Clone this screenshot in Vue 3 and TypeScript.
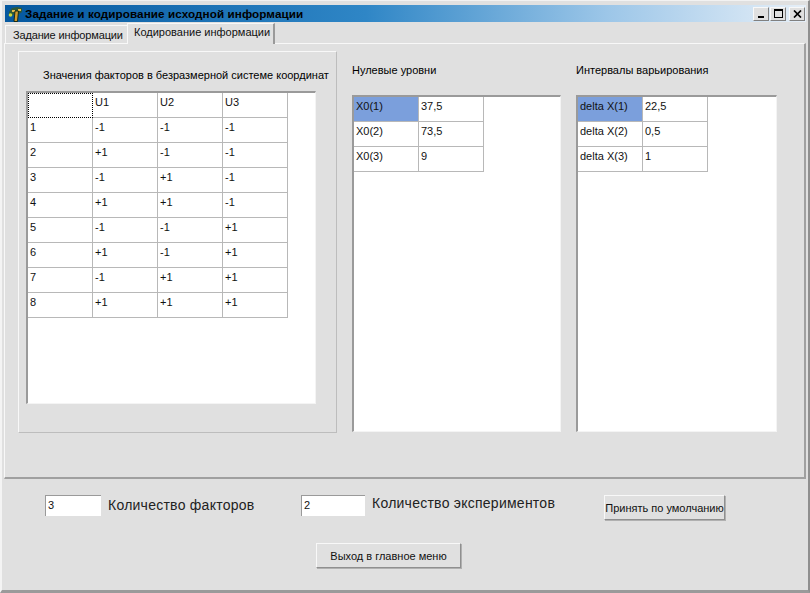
<script setup lang="ts">
const factorRows: string[][] = [
  ['', 'U1', 'U2', 'U3'],
  ['1', '-1', '-1', '-1'],
  ['2', '+1', '-1', '-1'],
  ['3', '-1', '+1', '-1'],
  ['4', '+1', '+1', '-1'],
  ['5', '-1', '-1', '+1'],
  ['6', '+1', '-1', '+1'],
  ['7', '-1', '+1', '+1'],
  ['8', '+1', '+1', '+1'],
]

const zeroRows: string[][] = [
  ['X0(1)', '37,5'],
  ['X0(2)', '73,5'],
  ['X0(3)', '9'],
]

const deltaRows: string[][] = [
  ['delta X(1)', '22,5'],
  ['delta X(2)', '0,5'],
  ['delta X(3)', '1'],
]
</script>

<template>
  <div class="window">
    <div class="titlebar">
      <svg class="app-icon" viewBox="0 0 16 16" aria-hidden="true">
        <path d="M2 6 5 2l5-1 5 1v4l-3 2-4-1-3 3-3-1z" fill="#2f5a3a" />
        <circle cx="3.500" cy="9" r="1.800" fill="#c8d840" />
        <path d="M5 4h3v2H5zM11 3h3v2h-3z" fill="#e2b84a" />
        <path d="M8 5h3.500l-1 10.500H7z" fill="#d09a30" stroke="#10240f" stroke-width=".9" />
      </svg>
      <span class="title">Задание и кодирование исходной информации</span>
      <div class="window-buttons">
        <button type="button" class="win-btn" aria-label="Свернуть"><i class="glyph-min" /></button>
        <button type="button" class="win-btn" aria-label="Развернуть"><i class="glyph-max" /></button>
        <button type="button" class="win-btn win-btn--close" aria-label="Закрыть">
          <svg viewBox="0 0 9 8" aria-hidden="true">
            <path d="M1 0.5 8 7.5M8 0.5 1 7.5" stroke="#000" stroke-width="1.7" fill="none" />
          </svg>
        </button>
      </div>
    </div>

    <div class="tabs">
      <div class="tab">Задание информации</div>
      <div class="tab tab--active">Кодирование информации</div>
    </div>

    <div class="page">
      <section class="group">
        <div class="group-label">Значения факторов в безразмерной системе координат</div>
        <div class="grid grid--factors">
          <div v-for="(row, r) in factorRows" :key="r" class="row">
            <div
              v-for="(cell, c) in row"
              :key="c"
              class="cell"
              :class="{ 'cell--focus': r === 0 && c === 0 }"
            >{{ cell }}</div>
          </div>
        </div>
      </section>

      <section class="side side--zero">
        <div class="side-label">Нулевые уровни</div>
        <div class="grid grid--side">
          <div v-for="(row, r) in zeroRows" :key="r" class="row">
            <div
              v-for="(cell, c) in row"
              :key="c"
              class="cell"
              :class="{ 'cell--selected': r === 0 && c === 0 }"
            >{{ cell }}</div>
          </div>
        </div>
      </section>

      <section class="side side--delta">
        <div class="side-label">Интервалы варьирования</div>
        <div class="grid grid--side">
          <div v-for="(row, r) in deltaRows" :key="r" class="row">
            <div
              v-for="(cell, c) in row"
              :key="c"
              class="cell"
              :class="{ 'cell--selected': r === 0 && c === 0 }"
            >{{ cell }}</div>
          </div>
        </div>
      </section>
    </div>

    <div class="bottom">
      <div class="bottom-row">
        <div class="field">3</div>
        <span class="field-label field-label--factors">Количество факторов</span>
        <div class="field field--second">2</div>
        <span class="field-label field-label--raised">Количество экспериментов</span>
        <button type="button" class="btn btn--default">Принять по умолчанию</button>
      </div>
      <button type="button" class="btn btn--exit">Выход в главное меню</button>
    </div>
  </div>
</template>

<style>
html,
body {
  margin: 0;
  background: #e0e0e0;
}
</style>

<style scoped>
.window {
  box-sizing: border-box;
  width: 810px;
  height: 593px;
  padding: 4px 2px 0 2px;
  overflow: hidden;
  display: flex;
  flex-direction: column;
  background: #e0e0e0;
  border-top: 1px solid #f2f2f2;
  border-right: 2px solid #8f8f8f;
  border-bottom: 3px solid #9a9a9a;
  border-left: 2px solid #f4f4f4;
  font-family: "Liberation Sans", Arial, sans-serif;
  font-size: 11px;
  color: #000;
}

.titlebar {
  flex: none;
  height: 17px;
  margin-left: 1px;
  display: flex;
  align-items: center;
  padding-left: 2px;
  background: linear-gradient(90deg, #05589f 0%, #2f86c6 45%, #9cc6e8 75%, #e6eff8 100%);
}

.app-icon {
  width: 16px;
  height: 16px;
  flex: none;
}

.title {
  margin-left: 2px;
  font-size: 11.7px;
  font-weight: 700;
  letter-spacing: 0.08px;
  color: #000;
  white-space: nowrap;
}

.window-buttons {
  margin-left: auto;
  margin-right: 1px;
  display: flex;
  gap: 1px;
}

.win-btn {
  box-sizing: border-box;
  width: 16px;
  height: 14px;
  padding: 0;
  display: flex;
  align-items: center;
  justify-content: center;
  position: relative;
  background: #e0e0e0;
  border: 1px solid;
  border-color: #f8f8f8 #808080 #808080 #f8f8f8;
}

.win-btn--close {
  margin-left: 2px;
}

.win-btn svg {
  width: 9px;
  height: 8px;
}

.glyph-min {
  width: 6px;
  height: 2px;
  margin-top: 7px;
  background: #000;
}

.glyph-max {
  box-sizing: border-box;
  width: 9px;
  height: 9px;
  border: 1px solid #000;
  border-top-width: 2px;
}

.tabs {
  flex: none;
  height: 21px;
  display: flex;
  align-items: flex-end;
  padding-left: 1px;
  position: relative;
  z-index: 1;
}

.tab {
  box-sizing: border-box;
  height: 18px;
  padding: 3px 0 0 7px;
  width: 122px;
  border-top: 1px solid #f8f8f8;
  border-left: 1px solid #f8f8f8;
  letter-spacing: -0.15px;
  white-space: nowrap;
  color: #111;
}

.tab--active {
  height: 21px;
  width: 148px;
  margin-bottom: -1px;
  padding: 2px 0 0 6px;
  background: #e0e0e0;
  border-right: 2px solid #9a9a9a;
  letter-spacing: 0;
}

.page {
  box-sizing: border-box;
  flex: none;
  height: 436px;
  padding: 7px 0 0 13px;
  display: flex;
  align-items: flex-start;
  border-top: 1px solid #f8f8f8;
  border-left: 1px solid #f8f8f8;
  border-right: 2px solid #a0a0a0;
  border-bottom: 2px solid #a0a0a0;
}

.group {
  box-sizing: border-box;
  width: 319px;
  height: 382px;
  padding: 17px 0 0 8px;
  border: 1px solid #bdbdbd;
  border-top-color: #f8f8f8;
  border-left-color: #f8f8f8;
}

.group-label {
  margin-left: -1px;
  padding-left: 17px;
  height: 22px;
  white-space: nowrap;
}

.side {
  box-sizing: border-box;
  height: 382px;
  padding-top: 13px;
}

.side--zero {
  margin-left: 15px;
  width: 209px;
}

.side--delta {
  margin-left: 15px;
  width: 201px;
}

.side-label {
  height: 31px;
  white-space: nowrap;
}

.grid {
  box-sizing: border-box;
  background: #fff;
  border-top: 2px solid #9a9a9a;
  border-left: 2px solid #9a9a9a;
  border-right: 1px solid #f4f4f4;
  border-bottom: 1px solid #f4f4f4;
}

.grid--factors {
  width: 290px;
  height: 313px;
  margin-left: -1px;
}

.grid--side {
  height: 337px;
}

.row {
  display: flex;
}

.cell {
  box-sizing: border-box;
  width: 65px;
  height: 25px;
  padding: 3px 0 0 2px;
  border-right: 1px solid #b8b8b8;
  border-bottom: 1px solid #b8b8b8;
  white-space: nowrap;
  color: #111;
}

.cell--focus {
  border: 1px dotted #000;
}

.cell--selected {
  background: #7b9fdc;
}

.bottom {
  flex: 1;
  position: relative;
}

.bottom-row {
  height: 64px;
  padding: 16px 0 0 41px;
  display: flex;
  align-items: flex-start;
  box-sizing: border-box;
}

.field {
  box-sizing: border-box;
  width: 56px;
  height: 21px;
  padding: 3px 0 0 2px;
  background: #fff;
  border-top: 1px solid #9a9a9a;
  border-left: 1px solid #9a9a9a;
  color: #111;
}

.field--second {
  width: 64px;
}

.field-label {
  width: 232px;
  margin-left: 7px;
  margin-top: 0;
  font-size: 14px;
  letter-spacing: 0.25px;
  white-space: nowrap;
  color: #222;
}

.field-label--factors {
  width: 193px;
  margin-top: 2px;
}

.btn {
  box-sizing: border-box;
  padding: 0;
  background: #e0e0e0;
  border: 1px solid;
  border-color: #f8f8f8 #8f8f8f #8f8f8f #f8f8f8;
  box-shadow: 1px 1px 0 #b0b0b0;
  font: inherit;
  color: #111;
  white-space: nowrap;
}

.btn--default {
  width: 121px;
  height: 25px;
}

.btn--exit {
  display: block;
  width: 145px;
  height: 25px;
  margin-left: 312px;
}
</style>
